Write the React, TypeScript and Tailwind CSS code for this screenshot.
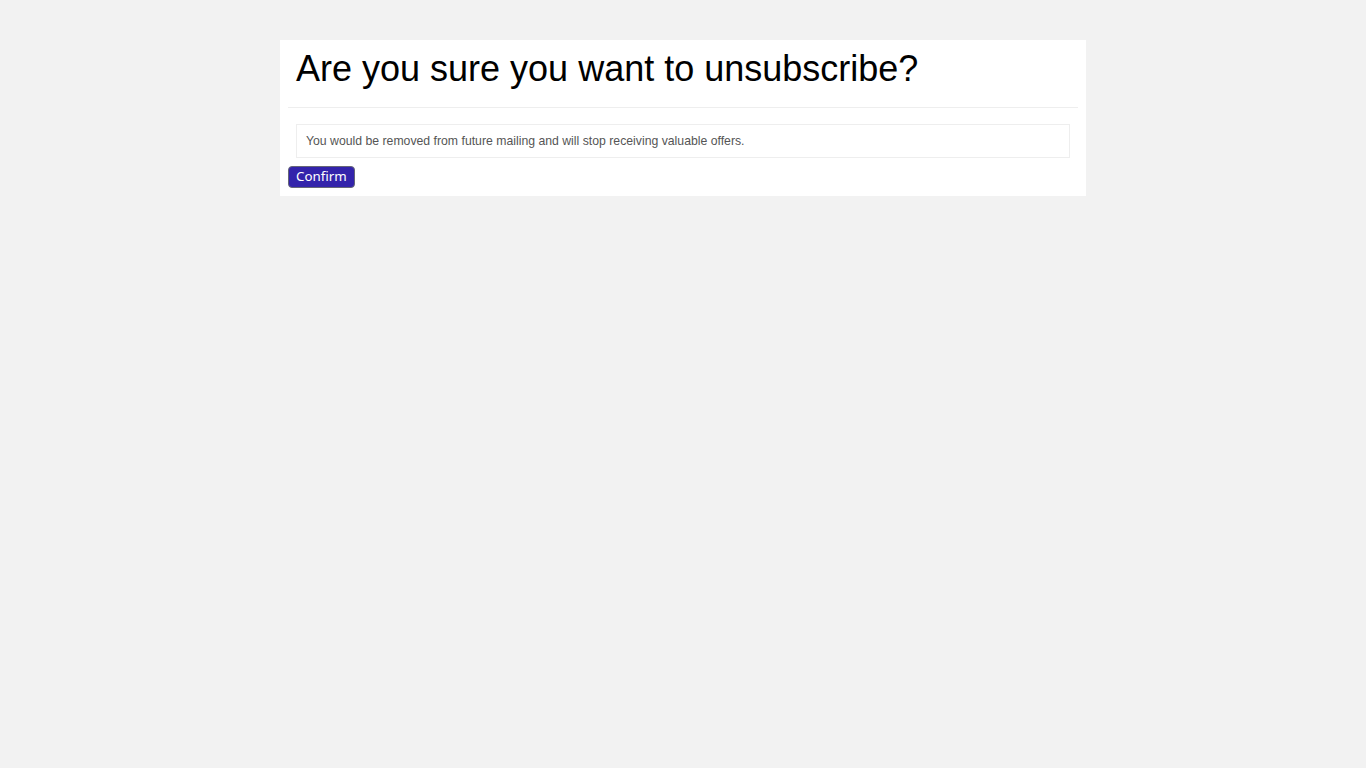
export default function App() {
  return (
    <div className="min-h-screen bg-[#f2f2f2] pt-10 font-['Liberation_Sans',Arial,sans-serif]">
      <div className="mx-auto w-[806px] bg-white p-2">
        <h1 className="px-2 pt-px text-[36px] leading-[40px] text-black">
          Are you sure you want to unsubscribe?
        </h1>
        <hr className="mt-[18px] border-t border-[#eeeeee]" />
        <div className="mx-2 mt-4 flex h-[34px] items-center border border-[#eeeeee] px-[9px] text-[12.25px] text-[#555555]">
          You would be removed from future mailing and will stop receiving valuable offers.
        </div>
        <button className="mt-2 flex h-[22px] items-center rounded-[4px] border border-[#666677] bg-[#3323ab] px-[7px] font-['Noto_Sans',sans-serif] text-[13.33px] text-white">
          Confirm
        </button>
      </div>
    </div>
  );
}
